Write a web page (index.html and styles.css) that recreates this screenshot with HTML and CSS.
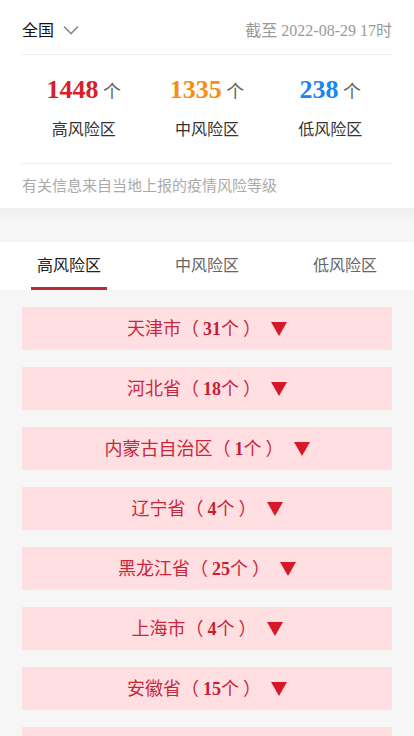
FILE: index.html
```html
<!DOCTYPE html>
<html lang="zh-CN">
<head>
	<meta charset="UTF-8">
	<title>疫情风险等级</title>
	<link rel="stylesheet" href="styles.css">
</head>
<body>
	<div class="summary">
		<div class="top">
			<div class="area">全国
				<svg class="chevron" width="16" height="10" viewBox="0 0 16 10"><polyline points="1,1.5 8,8.5 15,1.5" fill="none" stroke="#8a8a8a" stroke-width="1.6"/></svg>
			</div>
			<div class="time">截至 2022-08-29 17时</div>
		</div>
		<div class="stats">
			<div class="stat">
				<div class="num"><b class="high">1448</b> 个</div>
				<div class="label">高风险区</div>
			</div>
			<div class="stat">
				<div class="num"><b class="mid">1335</b> 个</div>
				<div class="label">中风险区</div>
			</div>
			<div class="stat">
				<div class="num"><b class="low">238</b> 个</div>
				<div class="label">低风险区</div>
			</div>
		</div>
		<div class="note">有关信息来自当地上报的疫情风险等级</div>
	</div>
	<div class="gap"></div>
	<div class="tabs">
		<span class="tab on">高风险区</span>
		<span class="tab">中风险区</span>
		<span class="tab">低风险区</span>
	</div>
	<div class="list">
		<div class="item">天津市（<span class="cnt"><b>31</b>个</span>）<i class="arrow"></i></div>
		<div class="item">河北省（<span class="cnt"><b>18</b>个</span>）<i class="arrow"></i></div>
		<div class="item">内蒙古自治区（<span class="cnt"><b>1</b>个</span>）<i class="arrow"></i></div>
		<div class="item">辽宁省（<span class="cnt"><b>4</b>个</span>）<i class="arrow"></i></div>
		<div class="item">黑龙江省（<span class="cnt"><b>25</b>个</span>）<i class="arrow"></i></div>
		<div class="item">上海市（<span class="cnt"><b>4</b>个</span>）<i class="arrow"></i></div>
		<div class="item">安徽省（<span class="cnt"><b>15</b>个</span>）<i class="arrow"></i></div>
		<div class="item">福建省（<span class="cnt"><b>6</b>个</span>）<i class="arrow"></i></div>
	</div>
</body>
</html>
```

FILE: styles.css
```css
*{
	margin: 0;
	padding: 0;
	box-sizing: border-box;
}
body{
	font-family: "Liberation Serif", "Noto Sans CJK SC", serif;
	background-color: #f6f6f6;
	color: #333;
}
.summary{
	background-color: #fff;
	padding: 0 22px;
}
.top{
	display: flex;
	justify-content: space-between;
	align-items: center;
	height: 55px;
	padding-top: 3px;
	border-bottom: 1px solid #eee;
}
.area{
	display: flex;
	align-items: center;
	font-size: 16px;
	color: #111;
}
.chevron{
	margin-left: 9px;
	margin-top: 2px;
}
.time{
	font-size: 16px;
	color: #999;
}
.stats{
	display: grid;
	grid-template-columns: 1fr 1fr 1fr;
	padding: 20px 0 21px;
	border-bottom: 1px solid #eee;
	text-align: center;
}
.num{
	font-size: 18px;
	line-height: 30px;
	color: #666;
}
.num b{
	font-size: 26px;
}
.high{
	color: #d81e2c;
}
.mid{
	color: #fa8c16;
}
.low{
	color: #1a86ef;
}
.label{
	margin-top: 11px;
	font-size: 16px;
	line-height: 24px;
}
.note{
	padding: 12px 0 12px;
	font-size: 15px;
	line-height: 20px;
	color: #aaa;
}
.gap{
	height: 34px;
	background: linear-gradient(#efefef, #f6f6f6 14px);
}
.tabs{
	display: grid;
	grid-template-columns: 1fr 1fr 1fr;
	height: 48px;
	background-color: #fff;
}
.tab{
	position: relative;
	text-align: center;
	font-size: 16px;
	line-height: 47px;
	color: #666;
}
.tab.on{
	color: #222;
}
.tab.on:after{
	content: '';
	position: absolute;
	left: 50%;
	bottom: 0;
	width: 76px;
	height: 3px;
	margin-left: -38px;
	background-color: #b8293a;
}
.list{
	padding: 17px 22px 0;
}
.item{
	display: flex;
	justify-content: center;
	align-items: center;
	height: 43px;
	margin-bottom: 17px;
	background-color: #ffdfe2;
	font-size: 18px;
	line-height: 18px;
	color: #c8283c;
}
.cnt{
	padding: 0 4px;
}
.item b{
	color: #c41e34;
}
.arrow{
	width: 0;
	height: 0;
	margin-left: 10px;
	border-left: 8px solid transparent;
	border-right: 8px solid transparent;
	border-top: 14px solid #d7182a;
}
```
